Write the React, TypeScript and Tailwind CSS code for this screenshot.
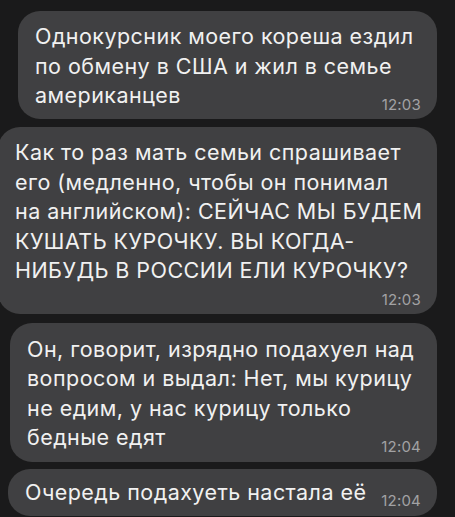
import React from "react";

type Msg = {
  lines: string[];
  time: string;
  timeOwnRow?: boolean;
  box: string;
};

const messages: Msg[] = [
  {
    lines: ["Однокурсник моего кореша ездил", "по обмену в США и жил в семье", "американцев"],
    time: "12:03",
    box: "ml-[18px] w-[419px] mt-[11px] pt-[11px] pb-[8px]",
  },
  {
    lines: [
      "Как то раз мать семьи спрашивает",
      "его (медленно, чтобы он понимал",
      "на английском): СЕЙЧАС МЫ БУДЕМ",
      "КУШАТЬ КУРОЧКУ. ВЫ КОГДА-",
      "НИБУДЬ В РОССИИ ЕЛИ КУРОЧКУ?",
    ],
    time: "12:03",
    timeOwnRow: true,
    box: "ml-[-2px] w-[439px] mt-[8.5px] pt-[11px] pb-[4px]",
  },
  {
    lines: [
      "Он, говорит, изрядно подахуел над",
      "вопросом и выдал: Нет, мы курицу",
      "не едим, у нас курицу только",
      "бедные едят",
    ],
    time: "12:04",
    box: "ml-[10px] w-[427px] mt-[9px] pt-[12px] pb-[9px]",
  },
  {
    lines: ["Очередь подахуеть настала её"],
    time: "12:04",
    box: "ml-[8px] w-[429px] mt-[7px] pt-[9px] pb-[9px]",
  },
];

const Time = ({ t }: { t: string }) => (
  <span className="self-end text-[15px] leading-[13px] tracking-[0.2px] text-[#a2a2a4]">{t}</span>
);

const Bubble = ({ m }: { m: Msg }) => {
  const head = m.timeOwnRow ? m.lines : m.lines.slice(0, -1);
  const last = m.timeOwnRow ? null : m.lines[m.lines.length - 1];
  return (
    <div className={`${m.box} shrink-0 rounded-[22px] bg-[#404042] pl-[17px] pr-[16px]`}>
      {head.map((l, i) => (
        <div key={i} className="whitespace-nowrap">
          {l}
        </div>
      ))}
      {last !== null ? (
        <div className="flex justify-between h-[29.5px]">
          <span className="whitespace-nowrap">{last}</span>
          <Time t={m.time} />
        </div>
      ) : (
        <div className="flex justify-end h-[20px] mt-[4px] items-center">
          <span className="text-[15px] leading-[20px] tracking-[0.2px] text-[#a2a2a4]">{m.time}</span>
        </div>
      )}
    </div>
  );
};

export default function App() {
  return (
    <div className="w-[455px] h-[517px] overflow-hidden bg-[#1a1a1b] flex flex-col font-['Inter','Liberation_Sans',sans-serif] text-[21.5px] leading-[29.5px] tracking-[0.45px] text-[#f1f1f1]">
      {messages.map((m, i) => (
        <Bubble key={i} m={m} />
      ))}
    </div>
  );
}
